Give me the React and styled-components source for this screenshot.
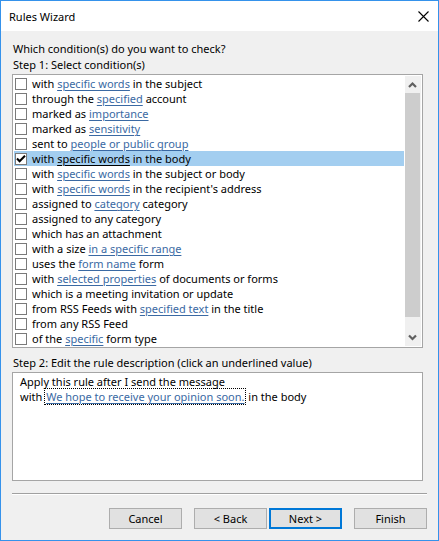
import React from 'react';
import styled, { createGlobalStyle } from 'styled-components';

const GlobalStyle = createGlobalStyle`
	* {
		box-sizing: border-box;
	}
	body {
		margin: 0;
		background: #f0f0f0;
		color: #000;
		font-family: "Noto Sans", "Open Sans", sans-serif;
		font-size: 11px;
		line-height: 15px;
	}
	button, input {
		font: inherit;
		color: inherit;
	}
`

const Dialog = styled.main`
	display: flex;
	flex-direction: column;
	min-height: 100vh;
	border: 1px solid #3592eb;
	background: #f0f0f0;
`
const TitleBar = styled.header`
	display: flex;
	align-items: center;
	justify-content: space-between;
	height: 30px;
	padding: 0 9px 0 8px;
	background: #fff;
`
const Title = styled.h1`
	margin: 0;
	font-size: 11px;
	font-weight: 400;
`
const CloseButton = styled.button`
	display: flex;
	padding: 0;
	border: 0;
	background: none;
`
const Content = styled.div`
	flex: 1;
	display: flex;
	flex-direction: column;
	padding: 10px 11px 11px;
`
const Caption = styled.p`
	margin: 0;
	padding-left: 1px;
	line-height: 16px;
`
const ListBox = styled.section`
	display: flex;
	gap: 1px;
	margin: 1px 4px 0 0;
	padding: 1px;
	border: 1px solid #a5a5a5;
	background: #fff;
`
const Conditions = styled.ul`
	flex: 1;
	margin: 0;
	padding: 0;
	list-style: none;
`
const Condition = styled.li`
	display: flex;
	align-items: center;
	height: 15px;
	padding-left: 1px;
	white-space: nowrap;
	background: ${props => props.$selected ? '#a3cef0' : 'transparent'};
`
const CheckBox = styled.input`
	appearance: none;
	flex: none;
	width: 12px;
	height: 12px;
	margin: 1px 5px 0 0;
	border: 1px solid #7a7a7a;
	background: #fff;

	&:checked {
		background: #fff url("data:image/svg+xml,%3Csvg xmlns='http://www.w3.org/2000/svg' viewBox='0 0 10 10'%3E%3Cpath d='M1 4.5L3.6 7.2L9 1.8' fill='none' stroke='black' stroke-width='2'/%3E%3C/svg%3E");
	}
`
const ValueLink = styled.a`
	color: ${props => props.$selected ? '#000' : '#3a69a3'};
	text-decoration: underline;
	text-decoration-thickness: 1px;
	text-underline-offset: 2px;
`
const FocusedLink = styled(ValueLink)`
	padding: 0 1px;
	outline: 1px dotted #000;
`
const ScrollBar = styled.div`
	display: flex;
	flex-direction: column;
	width: 16px;
	padding-right: 1px;
	background: #f0f0f0;
`
const ScrollButton = styled.button`
	display: flex;
	align-items: center;
	justify-content: center;
	height: 17px;
	padding: 0;
	border: 0;
	background: none;
`
const ScrollTrack = styled.div`
	flex: 1;
	padding-bottom: 12px;
`
const ScrollThumb = styled.div`
	height: 100%;
	background: #cdcdcd;
`
const StepTwo = styled.div`
	padding-top: 7px;
`
const Description = styled.section`
	min-height: 109px;
	margin: 1px 4px 0 0;
	padding: 1px 7px;
	border: 1px solid #a5a5a5;
	background: #fff;
`
const DescriptionLine = styled.p`
	margin: 0;
`
const Separator = styled.hr`
	width: 100%;
	margin: 12px 0 13px;
	border: 0;
	border-top: 1px solid #a0a0a0;
	border-bottom: 1px solid #fff;
`
const Actions = styled.footer`
	display: flex;
	justify-content: flex-end;
	gap: 12px;
`
const PageButtons = styled.div`
	display: flex;
	gap: 2px;
`
const DialogButton = styled.button`
	width: 73px;
	height: 21px;
	padding: 0;
	border: ${props => props.$primary ? '2px solid #0078d7' : '1px solid #adadad'};
	background: #e1e1e1;
	line-height: 16px;
`

// before / link / after
const conditions = [
	['with ', 'specific words', ' in the subject'],
	['through the ', 'specified', ' account'],
	['marked as ', 'importance', ''],
	['marked as ', 'sensitivity', ''],
	['sent to ', 'people or public group', ''],
	['with ', 'specific words', ' in the body'],
	['with ', 'specific words', ' in the subject or body'],
	['with ', 'specific words', " in the recipient's address"],
	['assigned to ', 'category', ' category'],
	['assigned to any category'],
	['which has an attachment'],
	['with a size ', 'in a specific range', ''],
	['uses the ', 'form name', ' form'],
	['with ', 'selected properties', ' of documents or forms'],
	['which is a meeting invitation or update'],
	['from RSS Feeds with ', 'specified text', ' in the title'],
	['from any RSS Feed'],
	['of the ', 'specific', ' form type'],
]

const Chevron = ({ d }) => (
	<svg width="9" height="7" viewBox="0 0 9 7" fill="none" stroke="#606060" strokeWidth="2.2">
		<path d={d} />
	</svg>
)

export default function App() {
	const [checked, setChecked] = React.useState([5])

	const toggle = (index) => {
		setChecked(checked.includes(index)
			? checked.filter(item => item !== index)
			: [...checked, index])
	}

	return (
		<Dialog>
			<GlobalStyle />
			<TitleBar>
				<Title>Rules Wizard</Title>
				<CloseButton aria-label="Close">
					<svg width="11" height="11" viewBox="0 0 11 11" stroke="#000" strokeWidth="1.1">
						<path d="M0.5 0.5L10.5 10.5M10.5 0.5L0.5 10.5" />
					</svg>
				</CloseButton>
			</TitleBar>

			<Content>
				<Caption>Which condition(s) do you want to check?</Caption>
				<Caption>Step 1: Select condition(s)</Caption>
				<ListBox>
					<Conditions>
						{conditions.map(([before, link, after], index) => (
							<Condition key={index} $selected={index === 5}>
								<CheckBox
									type="checkbox"
									id={`condition-${index}`}
									checked={checked.includes(index)}
									onChange={() => toggle(index)}
								/>
								<label htmlFor={`condition-${index}`}>
									{before}
									{link && <ValueLink href="#" $selected={index === 5}>{link}</ValueLink>}
									{after}
								</label>
							</Condition>
						))}
					</Conditions>
					<ScrollBar>
						<ScrollButton aria-label="Scroll up">
							<Chevron d="M1 6L4.5 2.5L8 6" />
						</ScrollButton>
						<ScrollTrack>
							<ScrollThumb />
						</ScrollTrack>
						<ScrollButton aria-label="Scroll down">
							<Chevron d="M1 1.5L4.5 5L8 1.5" />
						</ScrollButton>
					</ScrollBar>
				</ListBox>

				<StepTwo>
					<Caption>Step 2: Edit the rule description (click an underlined value)</Caption>
				</StepTwo>
				<Description>
					<DescriptionLine>Apply this rule after I send the message</DescriptionLine>
					<DescriptionLine>
						with <FocusedLink href="#">We hope to receive your opinion soon.</FocusedLink> in the body
					</DescriptionLine>
				</Description>

				<Separator />
				<Actions>
					<DialogButton>Cancel</DialogButton>
					<PageButtons>
						<DialogButton>&lt; Back</DialogButton>
						<DialogButton $primary>Next &gt;</DialogButton>
					</PageButtons>
					<DialogButton>Finish</DialogButton>
				</Actions>
			</Content>
		</Dialog>
	)
}
